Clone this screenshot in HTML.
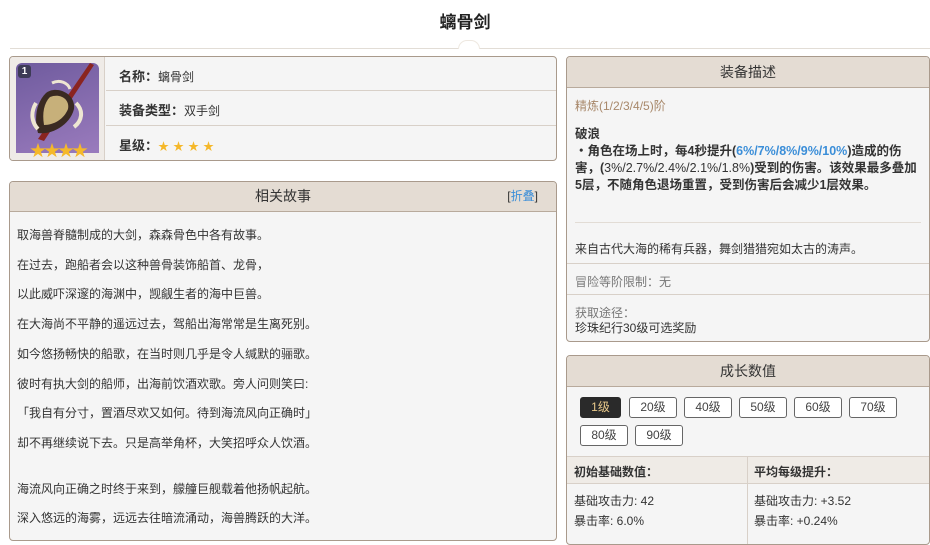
<!DOCTYPE html>
<html><head><meta charset="utf-8"><style>
*{margin:0;padding:0;box-sizing:border-box}
body{width:930px;height:534px;overflow:hidden;background:#fff;font-family:"Liberation Sans","Noto Sans CJK SC",sans-serif;color:#333;font-size:12px;position:relative}
.a{position:absolute}
.box{position:absolute;border:1px solid #a99a8c;border-radius:4px;background:#f5f5f5;overflow:hidden}
.hd{position:absolute;left:0;right:0;top:0;background:#e4dcd3;border-bottom:1px solid #b8aa9c;text-align:center;font-size:14px;color:#333}
.t{position:absolute;white-space:nowrap}
.btn{position:absolute;height:21px;border:1px solid #666;border-radius:3px;background:#fff;text-align:center;line-height:19px;font-size:12px;color:#444}
b{font-weight:bold}
</style></head><body>
<div class="a" style="left:0;width:930px;top:8px;text-align:center;font-size:17px;font-weight:bold;color:#222">螭骨剑</div>
<div class="a" style="left:10px;width:920px;top:48px;height:1px;background:#e2ddd6"></div>
<div class="a" style="left:458px;top:40px;width:22px;height:9px;border:1px solid #eee8e0;border-bottom:none;border-radius:11px 11px 0 0;background:#fff"></div>

<div class="box" style="left:9px;top:56px;width:548px;height:105px">
 <div class="a" style="left:0;top:0;width:95px;height:103px;background:#efebe7;border-right:1px solid #d8d0c8"></div>
 <div class="a" style="left:6px;top:6px;width:83px;height:90px;border-radius:6px 6px 0 0;background:linear-gradient(160deg,#6f5b9e,#9a7bbd)">
  <svg width="83" height="90" viewBox="0 0 83 90" style="position:absolute;left:0;top:0">
   <path d="M78 2 L28 78 L22 76 L74 0Z" fill="#8a2420"/>
   <path d="M30 30 C40 22 60 30 58 46 C54 62 36 72 22 70 C18 55 20 40 30 30Z" fill="#3a2a22"/>
   <path d="M34 34 C44 30 54 36 52 46 C48 56 38 62 28 62 C26 50 28 40 34 34Z" fill="#c7b07a"/>
   <path d="M20 40 C14 50 16 60 22 66" stroke="#eee6d2" stroke-width="4" fill="none"/>
   <path d="M60 40 C68 48 66 58 58 64" stroke="#eee6d2" stroke-width="4" fill="none"/>
   <path d="M36 20 C44 16 52 20 54 26" stroke="#eee6d2" stroke-width="3" fill="none"/>
  </svg>
  <div class="a" style="left:2px;top:2px;width:13px;height:13px;background:#3d3a55;border-radius:3px;color:#fff;font-size:10px;font-weight:bold;text-align:center;line-height:13px">1</div>
  <div class="a" style="left:14px;top:74px;color:#f5b82a;font-size:16px;letter-spacing:-2px">★★★★</div>
 </div>
 <div class="a" style="left:96px;top:33px;right:0;height:1px;background:#d8d0c8"></div>
 <div class="a" style="left:96px;top:68px;right:0;height:1px;background:#d8d0c8"></div>
 <div class="t" style="left:109px;top:9px"><b style="font-size:13px">名称：</b>螭骨剑</div>
 <div class="t" style="left:109px;top:43px"><b style="font-size:13px">装备类型：</b>双手剑</div>
 <div class="t" style="left:109px;top:78px"><b style="font-size:13px">星级：</b><span style="color:#f5b82a;font-size:11px;letter-spacing:4px">★★★★</span></div>
</div>

<div class="box" style="left:9px;top:181px;width:548px;height:360px">
 <div class="hd" style="height:30px;line-height:29px">相关故事<span style="position:absolute;right:18px;font-size:12px;color:#333">[<span style="color:#3b8ed8">折叠</span>]</span></div>
 <div style="position:absolute;left:7px;top:39px;line-height:29.7px;font-size:12px;color:#333">
 取海兽脊髓制成的大剑，森森骨色中各有故事。<br>在过去，跑船者会以这种兽骨装饰船首、龙骨，<br>以此威吓深邃的海渊中，觊觎生者的海中巨兽。<br>在大海尚不平静的遥远过去，驾船出海常常是生离死别。<br>如今悠扬畅快的船歌，在当时则几乎是令人缄默的骊歌。<br>彼时有执大剑的船师，出海前饮酒欢歌。旁人问则笑曰:<br>「我自有分寸，置酒尽欢又如何。待到海流风向正确时」<br>却不再继续说下去。只是高举角杯，大笑招呼众人饮酒。<br><div style="height:16px"></div>海流风向正确之时终于来到，艨艟巨舰载着他扬帆起航。<br>深入悠远的海雾，远远去往暗流涌动，海兽腾跃的大洋。
 </div>
</div>

<div class="box" style="left:566px;top:56px;width:364px;height:286px">
 <div class="hd" style="height:31px;line-height:31px">装备描述</div>
 <div class="t" style="left:8px;top:40px;color:#a8886a">精炼(1/2/3/4/5)阶</div>
 <div class="a" style="left:8px;top:69px;white-space:nowrap;line-height:17px;font-weight:bold;color:#333;font-size:12.5px">破浪<br>・角色在场上时，每4秒提升(<span style="color:#3b8ed8">6%/7%/8%/9%/10%</span>)造成的伤<br>害，(<span style="font-weight:normal">3%/2.7%/2.4%/2.1%/1.8%</span>)受到的伤害。该效果最多叠加<br>5层，不随角色退场重置，受到伤害后会减少1层效果。</div>
 <div class="a" style="left:8px;right:8px;top:165px;height:1px;background:#e2dcd5"></div>
 <div class="t" style="left:8px;top:183px">来自古代大海的稀有兵器，舞剑猎猎宛如太古的涛声。</div>
 <div class="a" style="left:0;right:0;top:206px;height:1px;background:#d8d0c8"></div>
 <div class="t" style="left:8px;top:216px;color:#777">冒险等阶限制：无</div>
 <div class="a" style="left:0;right:0;top:237px;height:1px;background:#d8d0c8"></div>
 <div class="t" style="left:8px;top:247px;color:#777">获取途径：</div>
 <div class="t" style="left:8px;top:262px">珍珠纪行30级可选奖励</div>
</div>

<div class="box" style="left:566px;top:355px;width:364px;height:190px">
 <div class="hd" style="height:31px;line-height:31px">成长数值</div>
 <div class="btn" style="left:13px;top:41px;width:41px;background:#2a2a2a;border-color:#2a2a2a;color:#e9c98a">1级</div>
 <div class="btn" style="left:62px;top:41px;width:48px">20级</div>
 <div class="btn" style="left:117px;top:41px;width:48px">40级</div>
 <div class="btn" style="left:172px;top:41px;width:48px">50级</div>
 <div class="btn" style="left:227px;top:41px;width:48px">60级</div>
 <div class="btn" style="left:282px;top:41px;width:48px">70级</div>
 <div class="btn" style="left:13px;top:69px;width:48px">80级</div>
 <div class="btn" style="left:68px;top:69px;width:48px">90级</div>
 <div class="a" style="left:0;right:0;top:100px;height:28px;background:#efebe6;border-top:1px solid #d8d0c8;border-bottom:1px solid #d8d0c8"></div>
 <div class="a" style="left:180px;top:100px;width:1px;height:90px;background:#d8d0c8"></div>
 <div class="t" style="left:7px;top:107px;font-weight:bold">初始基础数值：</div>
 <div class="t" style="left:187px;top:107px;font-weight:bold">平均每级提升：</div>
 <div class="t" style="left:7px;top:136px">基础攻击力: 42</div>
 <div class="t" style="left:7px;top:156px">暴击率: 6.0%</div>
 <div class="t" style="left:187px;top:136px">基础攻击力: +3.52</div>
 <div class="t" style="left:187px;top:156px">暴击率: +0.24%</div>
</div>
</body></html>
